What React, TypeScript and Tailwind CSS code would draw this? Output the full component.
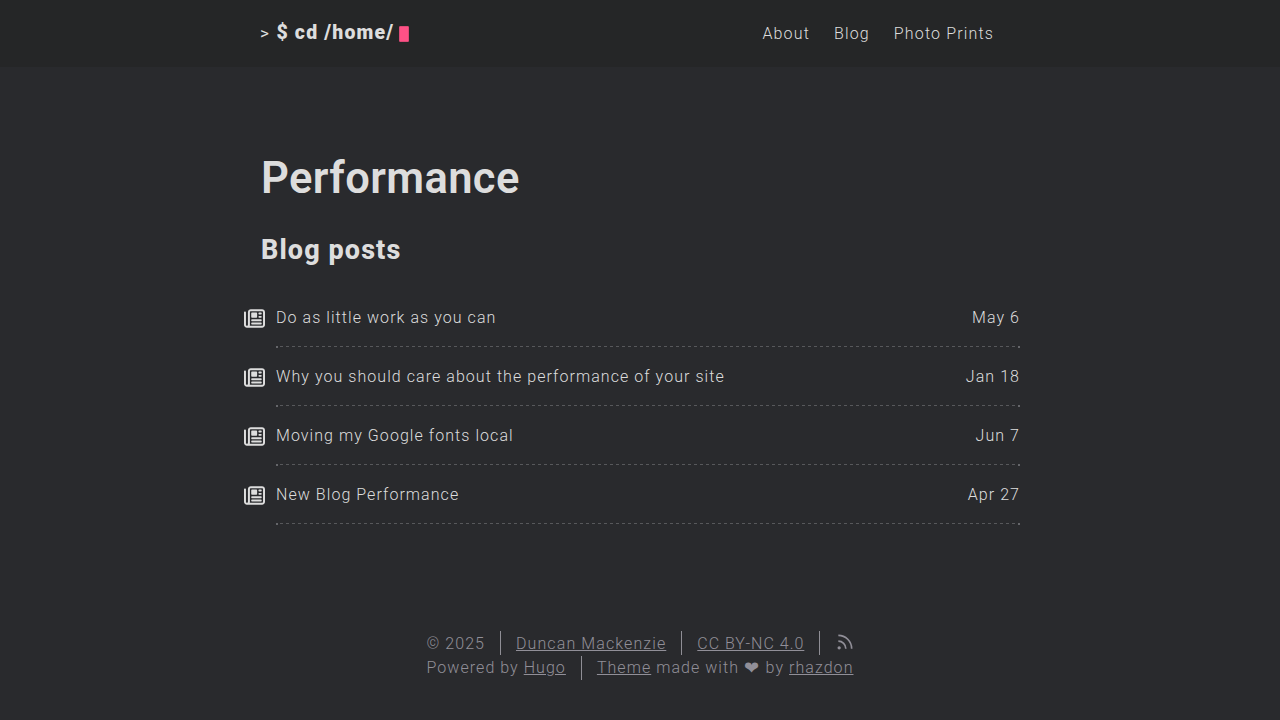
import { FaRegNewspaper } from "react-icons/fa6";

const posts = [
  { title: "Do as little work as you can", date: "May 6" },
  { title: "Why you should care about the performance of your site", date: "Jan 18" },
  { title: "Moving my Google fonts local", date: "Jun 7" },
  { title: "New Blog Performance", date: "Apr 27" },
];

function Divider() {
  return <span className="mx-[15px] h-6 w-px shrink-0 bg-[#8f8e95]" />;
}

function DashedRule() {
  return (
    <div className="flex h-[2px] items-start">
      <span className="mr-[2px] size-[2px] bg-[#65666a]" />
      <span className="h-px flex-1 bg-[repeating-linear-gradient(90deg,#57585b_0_3px,transparent_3px_6px)]" />
      <span className="size-[2px] bg-[#65666a]" />
    </div>
  );
}

function RssIcon() {
  return (
    <svg viewBox="0 0 24 24" className="mt-px size-5" fill="none" stroke="currentColor" strokeWidth="2">
      <path d="M4 11a9 9 0 0 1 9 9" />
      <path d="M4 4a16 16 0 0 1 16 16" />
      <circle cx="5" cy="19" r="1" />
    </svg>
  );
}

export default function App() {
  return (
    <div className="h-screen overflow-hidden bg-[#292a2d] font-['Roboto',sans-serif] text-base font-light leading-6 tracking-[1.05px] text-[#dddddd]">
      <header className="h-[67px] bg-[#252627]">
        <div className="mx-auto flex h-[67px] w-[760px] items-center justify-between pr-[26px]">
          <a className="flex items-center" href="#">
            <span className="mr-[6px] pb-[2px] text-[17px] font-normal tracking-[1.5px]">&gt;</span>
            <span className="pb-[2px] text-[19.5px] font-black tracking-[1.15px]">$ cd /home/</span>
            <span className="ml-[5px] h-4 w-[10px] rounded-[1px] border border-[#dc4a76] bg-[#fe5186]" />
          </a>
          <nav className="flex gap-[24px] tracking-[1.15px]">
            <a href="#">About</a>
            <a href="#">Blog</a>
            <a href="#">Photo Prints</a>
          </nav>
        </div>
      </header>
      <main className="mx-auto w-[760px] pt-[84px]">
        <h1 className="pl-px text-[43.5px] font-semibold leading-[56px] tracking-[0.4px]">Performance</h1>
        <h2 className="mt-[23px] pl-px text-[27px] font-extrabold leading-10 tracking-[1.1px]">Blog posts</h2>
        <ul className="mt-[18px]">
          {posts.map((p) => (
            <li key={p.title} className="-ml-4 flex h-[59px]">
              <FaRegNewspaper className="mt-[20px] mr-[11px] size-[21px] shrink-0" />
              <div className="h-[60px] flex-1">
                <div className="flex h-[58px] justify-between pt-[18px]">
                  <a className="tracking-[1.06px]" href="#">{p.title}</a>
                  <span>{p.date}</span>
                </div>
                <DashedRule />
              </div>
            </li>
          ))}
        </ul>
      </main>
      <footer className="mx-auto mt-[107px] w-[427px] text-[#918f98]">
        <div className="flex h-[25px] whitespace-pre">
          <span className="pt-px">© 2025</span>
          <Divider />
          <a className="pt-px tracking-[1.1px] underline" href="#">Duncan Mackenzie</a>
          <Divider />
          <a className="pt-px tracking-[1px] underline" href="#">CC BY-NC 4.0</a>
          <Divider />
          <a href="#" aria-label="RSS"><RssIcon /></a>
        </div>
        <div className="flex whitespace-pre">
          <span>Powered by <a className="underline" href="#">Hugo</a></span>
          <Divider />
          <span><a className="underline" href="#">Theme</a> made with </span>
          <span className="w-[18px] text-[18px] tracking-normal">❤</span>
          <span> by <a className="underline" href="#">rhazdon</a></span>
        </div>
      </footer>
    </div>
  );
}
